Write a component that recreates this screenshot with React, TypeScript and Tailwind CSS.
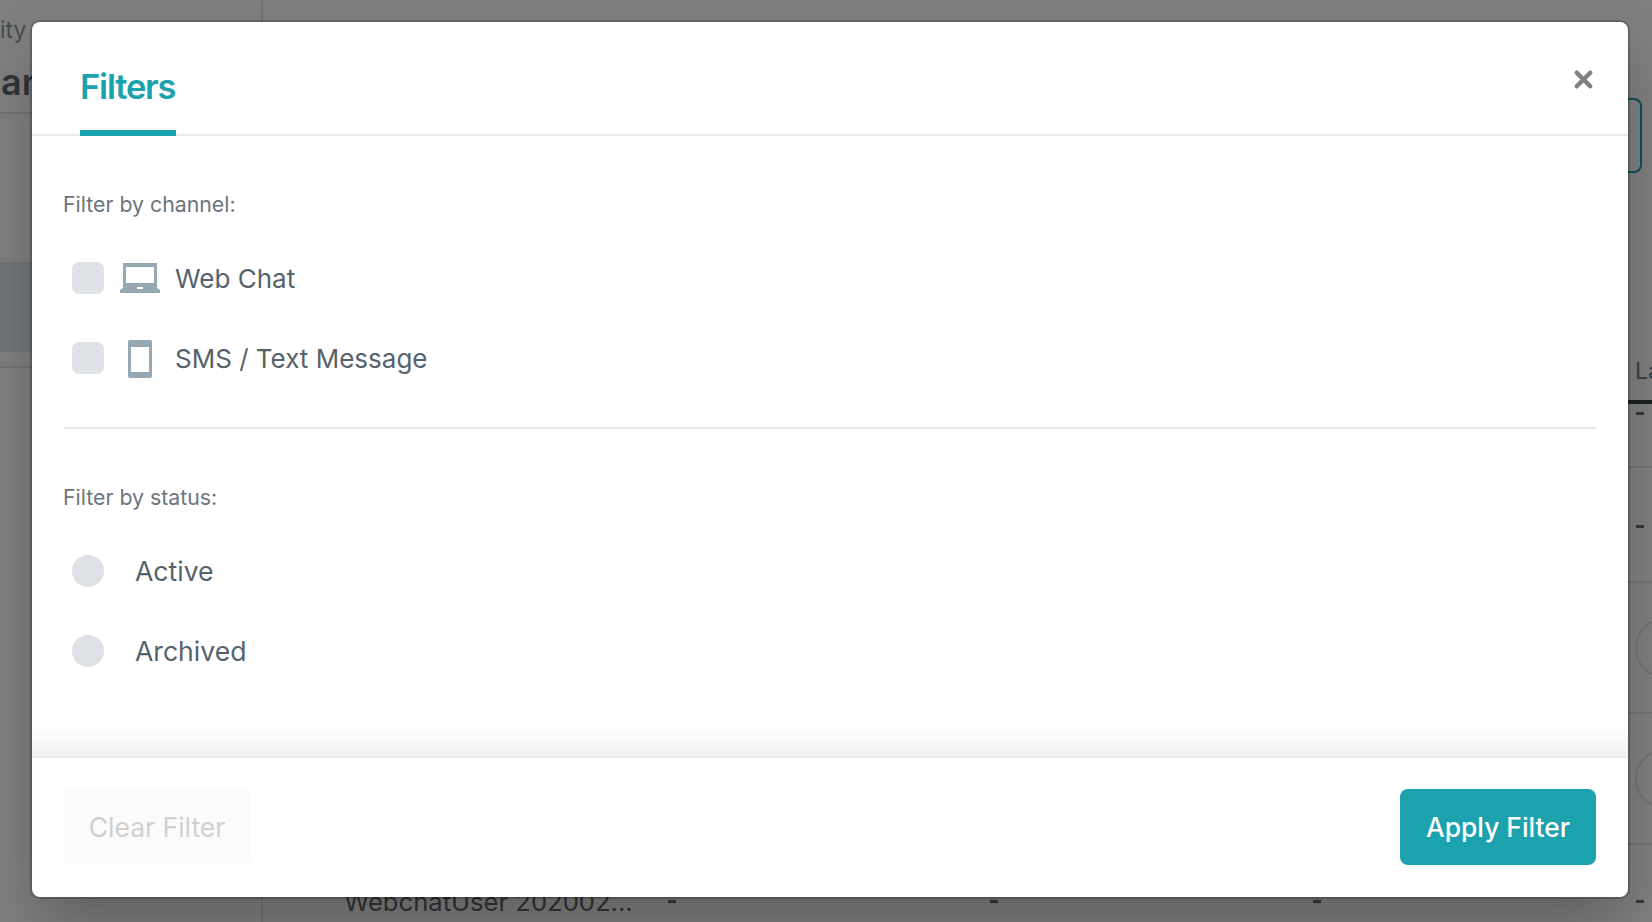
import { X } from "lucide-react";

const FONT = "font-['Inter','Liberation_Sans',sans-serif]";

function LaptopIcon() {
  return (
    <svg width="40" height="30" viewBox="0 0 40 30" fill="#96a8b2" className="block">
      <path d="M3 0h34v25H3zM6 4v16h28V4z" fillRule="evenodd" />
      <path d="M3 25h34l3 2v3H0v-3z" />
      <path d="M17 24h6v2h-6z" fill="#fff" />
    </svg>
  );
}

function PhoneIcon() {
  return (
    <svg width="24" height="38" viewBox="0 0 24 38" fill="#96a8b2" className="mt-[2px] block">
      <path
        d="M2 0h20a2 2 0 0 1 2 2v34a2 2 0 0 1-2 2H2a2 2 0 0 1-2-2V2a2 2 0 0 1 2-2zM3 7v25h18V7z"
        fillRule="evenodd"
      />
    </svg>
  );
}

function Option({
  round,
  icon,
  label,
}: {
  round?: boolean;
  icon?: React.ReactNode;
  label: string;
}) {
  return (
    <label className="flex h-[32px] items-center">
      <span
        className={`size-[32px] shrink-0 bg-[#dee2e6] ${round ? "rounded-full" : "rounded-[7px]"}`}
      />
      {icon ? (
        <span className="flex w-[71px] shrink-0 items-center justify-center pl-[1px]">
          {icon}
        </span>
      ) : (
        <span className="w-[31px] shrink-0" />
      )}
      <span
        className={`leading-none whitespace-nowrap text-[#55636c] ${round ? "text-[26.6px]" : "pt-[2px] text-[26px]"}`}
      >
        {label}
      </span>
    </label>
  );
}

function BackgroundPage() {
  return (
    <div className="flex h-[922px] w-[1652px] overflow-hidden bg-white">
      {/* Sidebar */}
      <div className="w-[263px] shrink-0 border-r-2 border-[#e4e6e8]">
        <div className="h-[114px] border-b-2 border-[#e4e6e8] pt-[16px]">
          <div className="text-[23px] leading-[28px] text-[#8e989e]">ity</div>
          <div className="mt-[16px] ml-[1px] text-[36px] leading-[44px] font-semibold text-[#5e686e]">
            an
          </div>
        </div>
        <div className="h-[150px] border-b-2 border-[#e4e6e8]" />
        <div className="h-[88px] bg-[#e7ecf2]" />
        <div className="h-[16px] border-b-2 border-[#e4e6e8]" />
      </div>

      {/* Main table */}
      <div className="flex w-[1389px] shrink-0 flex-col">
        <div className="flex justify-end pt-[98px] pr-[10px]">
          <div className="h-[75px] w-[160px] rounded-[8px] border-2 border-[#16a0ac]" />
        </div>
        <div className="mt-[185px] flex h-[46px] items-center justify-end overflow-hidden border-b-4 border-[#384248] pb-[15px]">
          <span className="w-[17px] text-[23px] whitespace-nowrap text-[#687c88]">La</span>
        </div>
        <div className="flex h-[64px] justify-end border-b-2 border-[#e4e6e8] pt-[8px] pr-[8px]">
          <Dash />
        </div>
        <div className="flex h-[115px] justify-end border-b-2 border-[#e4e6e8] pt-[57px] pr-[8px]">
          <Dash />
        </div>
        <CircleRow />
        <CircleRow />
        <div className="flex h-[77px] items-center pt-[36px] text-[25.6px] leading-none text-[#5e686e]">
          <span className="ml-[81px] w-[324px] whitespace-nowrap">WebchatUser 202002...</span>
          <span className="w-[322px]">
            <Dash />
          </span>
          <span className="w-[323px]">
            <Dash />
          </span>
          <span className="w-[323px]">
            <Dash />
          </span>
          <Dash />
        </div>
      </div>
    </div>
  );
}

function Dash() {
  return <span className="block h-[3px] w-[8px] bg-[#6a7276]" />;
}

function CircleRow() {
  return (
    <div className="flex h-[131px] items-center justify-end overflow-hidden border-b-2 border-[#e4e6e8]">
      <span className="-mr-[43px] size-[60px] shrink-0 rounded-full border-2 border-[#e4e6e8]" />
    </div>
  );
}

export default function App() {
  return (
    <div className={`relative h-[922px] w-[1652px] overflow-hidden ${FONT}`}>
      <BackgroundPage />
      <div className="absolute inset-0 bg-black/50" />

      {/* Modal */}
      <div className="absolute top-[22px] left-[32px] flex h-[875px] w-[1596px] flex-col rounded-[8px] bg-white shadow-[0_0_0_2px_rgba(0,0,0,0.2),0_30px_60px_-5px_rgba(0,0,0,0.25)]">
        <div className="relative flex h-[114px] shrink-0 border-b-2 border-[#e9ecef] pl-[48px]">
          <div className="-mb-[2px] flex h-[114px] w-[96px] items-center border-b-[6px] border-[#1ca2ac] pt-[22px] text-[34.5px] font-semibold tracking-[-1.2px] whitespace-nowrap text-[#1ca2ac]">
            Filters
          </div>
          <button className="absolute top-[44px] right-[31px] text-[#808080]">
            <X size={27} strokeWidth={4} />
          </button>
        </div>

        <div className="flex flex-1 flex-col bg-[linear-gradient(to_bottom,#fff_calc(100%-30px),#eff1f3)] px-[32px]">
          <div className="flex h-[293px] shrink-0 flex-col border-b-2 border-[#e4e6e8]">
            <div className="mt-[54px] -ml-[1px] text-[21.3px] leading-[28px] text-[#6c757d]">
              Filter by channel:
            </div>
            <div className="mt-[44px] flex flex-col gap-[48px] pl-[8px]">
              <Option icon={<LaptopIcon />} label="Web Chat" />
              <Option icon={<PhoneIcon />} label="SMS / Text Message" />
            </div>
          </div>
          <div className="mt-[54px] -ml-[1px] text-[21.3px] leading-[28px] text-[#6c757d]">
            Filter by status:
          </div>
          <div className="mt-[44px] flex flex-col gap-[48px] pl-[8px]">
            <Option round label="Active" />
            <Option round label="Archived" />
          </div>
        </div>

        <div className="flex h-[141px] shrink-0 items-start justify-between border-t-2 border-[#e9ecef] px-[32px] pt-[31px]">
          <button className="h-[76px] w-[186px] rounded-[8px] bg-[#fbfbfb] pt-[2px] text-[26.5px] text-[#d0d0d0]">
            Clear Filter
          </button>
          <button className="h-[76px] w-[196px] rounded-[8px] bg-[#1ca2ac] pt-[2px] text-[26.4px] font-medium text-white">
            Apply Filter
          </button>
        </div>
      </div>
    </div>
  );
}
